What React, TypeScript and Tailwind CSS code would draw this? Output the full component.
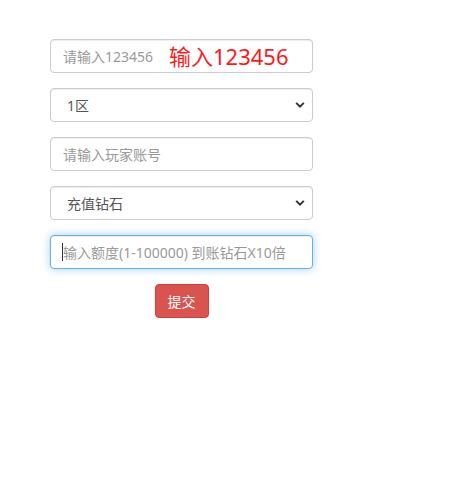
import React from "react"

const font = "font-['Noto_Sans','Noto_Sans_CJK_SC',sans-serif]"

const fieldBase =
  "block w-full h-[34px] px-3 text-[14px] text-[#555] bg-white border rounded-[4px] outline-none placeholder:text-[#999]"

const Chevron = () => (
  <svg className="pointer-events-none absolute right-[8px] top-1/2 -translate-y-1/2" width="10" height="7" viewBox="0 0 10 7">
    <path d="M1.2 1.4 L5 5.2 L8.8 1.4" fill="none" stroke="#333" strokeWidth="2" />
  </svg>
)

const Select = ({ options }: { options: string[] }) => (
  <div className="relative">
    <select className={`${fieldBase} appearance-none pl-4 border-[#ccc] shadow-[inset_0_1px_1px_rgba(0,0,0,0.075)]`}>
      {options.map((o) => (
        <option key={o}>{o}</option>
      ))}
    </select>
    <Chevron />
  </div>
)

export default function App() {
  return (
    <div className={`min-h-[482px] bg-white pt-[39px] pl-[50px] ${font}`}>
      <form className="w-[263px] flex flex-col gap-[15px]" onSubmit={(e) => e.preventDefault()}>
        <div className="relative">
          <input
            className={`${fieldBase} border-[#ccc] shadow-[inset_0_1px_1px_rgba(0,0,0,0.075)]`}
            placeholder="请输入123456"
          />
          <span className="absolute left-[119px] top-[4px] text-[22px] leading-[26px] text-[#ff1a1a] whitespace-nowrap">
            输入123456
          </span>
        </div>

        <Select options={["1区", "2区", "3区"]} />

        <input
          className={`${fieldBase} border-[#ccc] shadow-[inset_0_1px_1px_rgba(0,0,0,0.075)]`}
          placeholder="请输入玩家账号"
        />

        <Select options={["充值钻石", "充值金币"]} />

        <div className="relative">
          <input
            className={`${fieldBase} border-[#66afe9] shadow-[inset_0_1px_1px_rgba(0,0,0,0.075),0_0_8px_rgba(102,175,233,0.6)]`}
            placeholder="输入额度(1-100000) 到账钻石X10倍"
          />
          <span className="absolute left-[12px] top-[8px] h-[18px] w-px bg-[#333]" />
        </div>

        <div className="flex justify-center">
          <button
            type="submit"
            className="h-[34px] px-3 text-[14px] text-white bg-[#d9534f] border border-[#d43f3a] rounded-[4px]"
          >
            提交
          </button>
        </div>
      </form>
    </div>
  )
}
